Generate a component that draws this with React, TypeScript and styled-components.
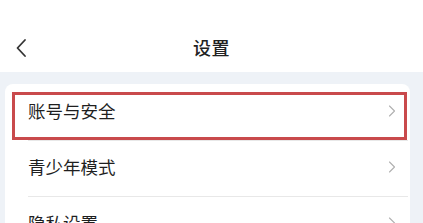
import styled, { createGlobalStyle } from 'styled-components'

const GlobalStyle = createGlobalStyle`
  html, body {
    margin: 0;
    padding: 0;
    background: #eef2f7;
  }
  body {
    font-family: "Noto Sans CJK SC", "Noto Sans", sans-serif;
  }
`

const items = ['账号与安全', '青少年模式', '隐私设置']

const App = () => {
  return (
    <Page>
      <GlobalStyle />
      <Header>
        <Back aria-label="back">
          <svg width="12" height="20" viewBox="0 0 12 20">
            <path d="M10 2 L2.5 10 L10 18" fill="none" stroke="#333" strokeWidth="1.8" strokeLinecap="round" strokeLinejoin="round" />
          </svg>
        </Back>
        <Title>设置</Title>
      </Header>
      <Body>
        <Card>
          {items.map((label, i) => (
            <Row key={label} $divider={i > 0}>
              <Label>{label}</Label>
              <Arrow width="8" height="12" viewBox="0 0 8 12">
                <path d="M1.5 1 L6.5 6 L1.5 11" fill="none" stroke="#b0b0b0" strokeWidth="1.1" strokeLinecap="round" strokeLinejoin="round" />
              </Arrow>
              {i === 0 && <Highlight />}
            </Row>
          ))}
        </Card>
      </Body>
    </Page>
  )
}

export default App

const Page = styled.div`
  width: 423px;
  height: 223px;
  overflow: hidden;
  background: #eef2f7;
`

const Header = styled.div`
  position: relative;
  height: 72px;
  background: #ffffff;
  display: flex;
  align-items: center;
  justify-content: center;
`

const Back = styled.div`
  position: absolute;
  left: 15px;
  top: 38px;
  width: 12px;
  height: 20px;
  display: flex;
`

const Title = styled.h1`
  margin: 0;
  padding-top: 22px;
  font-size: 18px;
  font-weight: 500;
  color: #222;
  letter-spacing: 0.5px;
`

const Body = styled.div`
  padding: 12px 13px 0 5px;
`

const Card = styled.div`
  background: #ffffff;
  border-radius: 8px 8px 0 0;
`

const Row = styled.div<{ $divider: boolean }>`
  position: relative;
  height: 56px;
  display: flex;
  align-items: center;
  justify-content: space-between;
  padding: 0 14px 0 23px;
  &::before {
    content: '';
    display: ${p => (p.$divider ? 'block' : 'none')};
    position: absolute;
    top: 0;
    left: 23px;
    right: 2px;
    height: 1px;
    background: #e8e8e8;
  }
`

const Label = styled.span`
  font-size: 17.5px;
  color: #1f1f1f;
  margin-top: -3px;
`

const Arrow = styled.svg`
  margin-top: -2px;
`

const Highlight = styled.div`
  position: absolute;
  left: 7px;
  top: 8px;
  width: 389px;
  height: 42px;
  border: 3px solid #c94a4c;
  pointer-events: none;
`
